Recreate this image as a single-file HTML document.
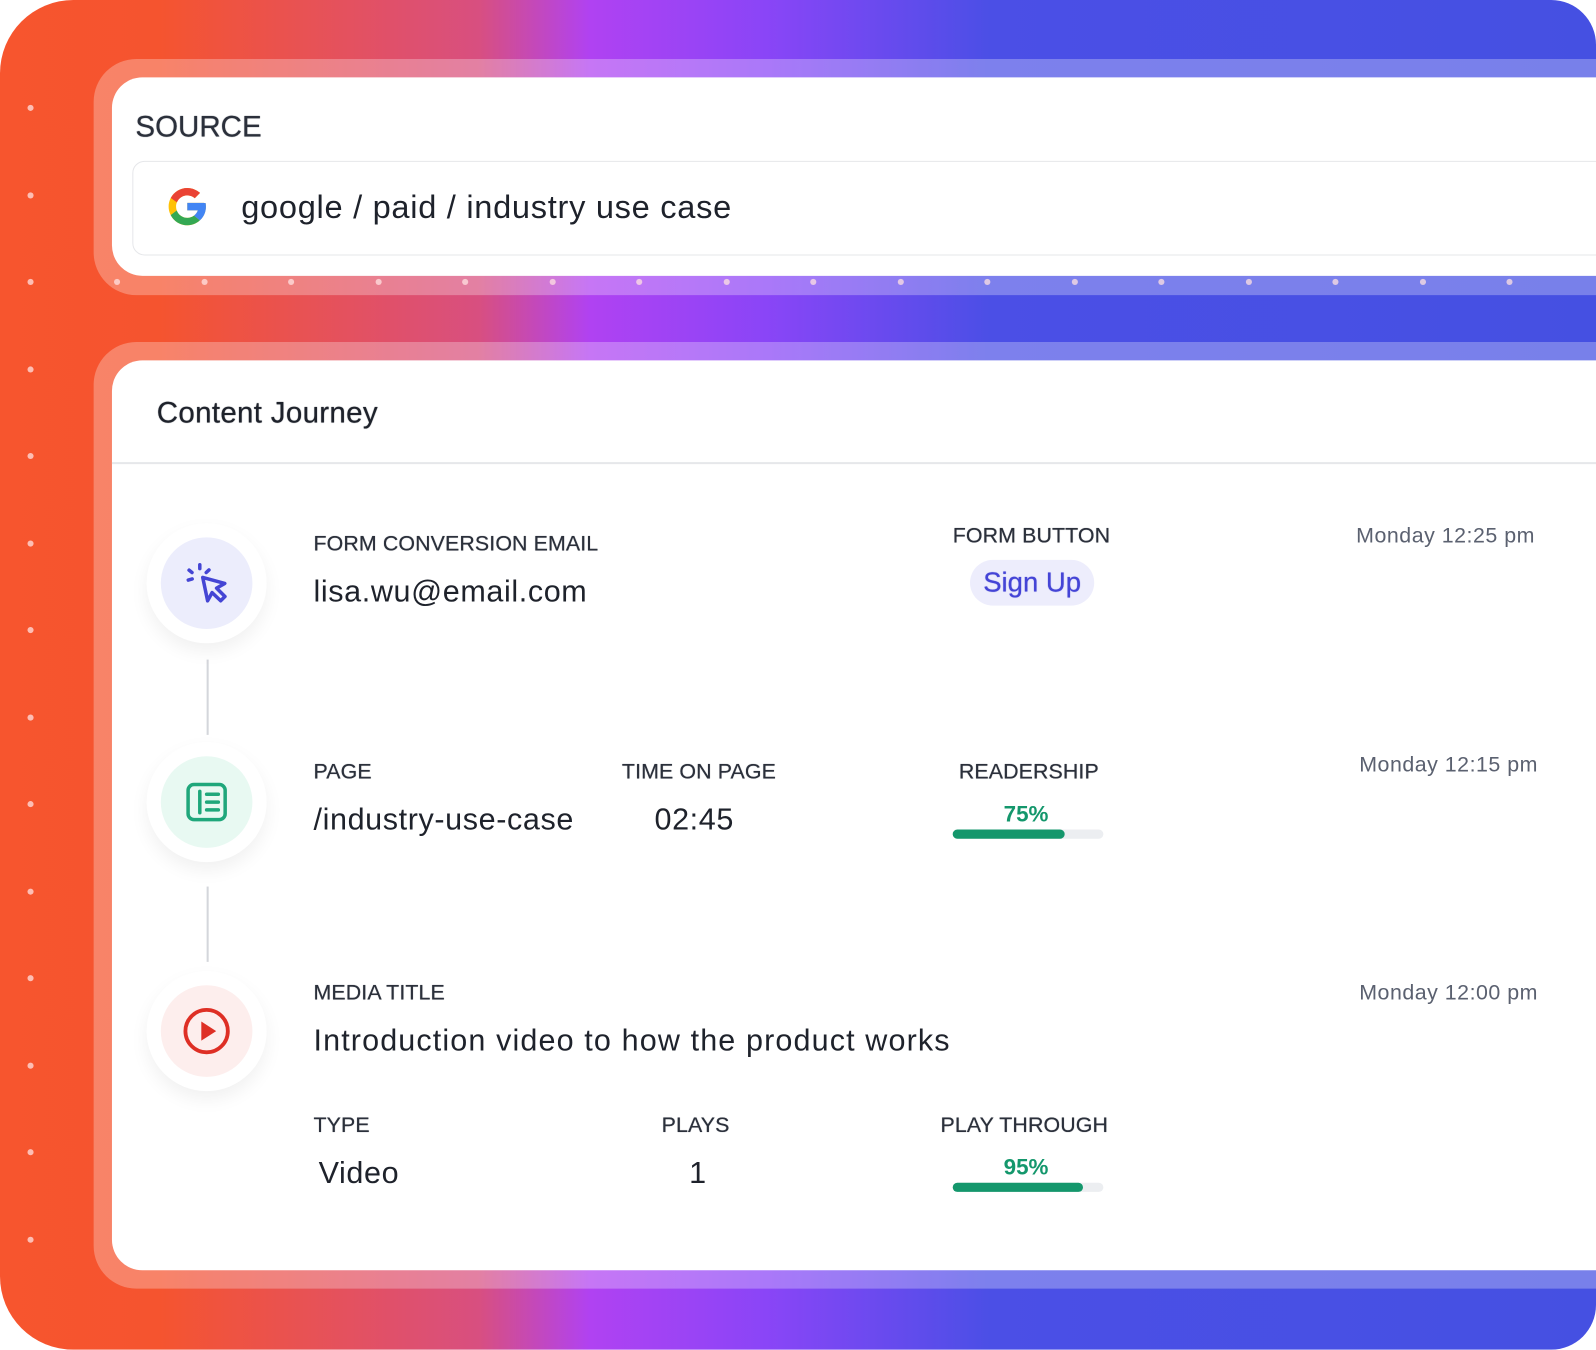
<!DOCTYPE html>
<html><head><meta charset="utf-8"><style>
html,body{margin:0;padding:0;background:#fff;}
body{width:1596px;height:1350px;overflow:hidden;font-family:"Liberation Sans",sans-serif;}
#s{position:absolute;left:0;top:0;width:1568px;height:1326px;transform:scale(1.01786);transform-origin:0 0;}
.bg{position:absolute;left:0;top:0;width:1568px;height:1326px;border-radius:72px 44px 44px 72px;
background:linear-gradient(90deg,#f7552e 0%,#f5542f 10%,#d84f80 30%,#b042f2 37%,#8a45f7 48%,#4b4fe6 62%,#4550e2 100%);overflow:hidden;}
.dot{position:absolute;width:6px;height:6px;border-radius:50%;background:rgba(255,225,225,.75);}
.frame{position:absolute;left:92px;right:-20px;border-radius:42px 0 0 42px;background:rgba(255,255,255,.28);}
.card{position:absolute;left:110px;right:-20px;background:#fff;border-radius:30px 0 0 30px;}
.abs{position:absolute;white-space:nowrap;}
.lbl{font-size:21px;color:#2b303b;letter-spacing:.1px;text-shadow:0 0 .6px #2b303b;}
.val{font-size:30px;color:#1e222b;letter-spacing:.6px;}
.time{font-size:21px;color:#5b6170;letter-spacing:.5px;}
.circ{position:absolute;width:118px;height:118px;border-radius:50%;background:#fff;box-shadow:0 8px 18px rgba(0,0,0,.06);}
.circ div{position:absolute;left:14px;top:14px;width:90px;height:90px;border-radius:50%;display:flex;align-items:center;justify-content:center;}
.vl{position:absolute;left:203px;width:2px;background:#d4d6db;}
.bar{position:absolute;width:148px;height:9px;border-radius:5px;background:#eceef1;}
.bar i{position:absolute;left:0;top:0;height:9px;border-radius:5px;background:#14976c;}
.pct{font-size:22px;font-weight:bold;color:#14976c;}
</style></head><body><div id="s">
<div class="bg">
<div class="frame" style="top:58px;height:232px;"></div>
<div class="frame" style="top:336px;height:930px;"></div>
</div>
<div id="dots"></div>
<div class="card" style="top:76px;height:195px;"></div>
<div class="card" style="top:354px;height:894px;"></div>

<div class="abs" style="left:133px;top:109px;font-size:29px;color:#2b303b;text-shadow:0 0 .8px #2b303b;">SOURCE</div>
<div class="abs" style="left:130px;top:158px;width:1460px;height:91px;border:1.5px solid #e6e7ea;border-radius:12px;"></div>
<svg class="abs" style="left:162px;top:181px" width="44" height="44" viewBox="0 0 48 48">
<path fill="#FFC107" d="M43.6 20.1H42V20H24v8h11.3c-1.6 4.7-6.1 8-11.3 8-6.6 0-12-5.4-12-12s5.4-12 12-12c3.1 0 5.8 1.2 8 3l5.7-5.7C34 6.1 29.3 4 24 4 13 4 4 13 4 24s9 20 20 20 20-9 20-20c0-1.3-.1-2.6-.4-3.9z"/>
<path fill="#EA4335" d="M6.3 14.7l6.6 4.8C14.7 15.1 19 12 24 12c3.1 0 5.8 1.2 8 3l5.7-5.7C34 6.1 29.3 4 24 4 16.3 4 9.7 8.3 6.3 14.7z"/>
<path fill="#34A853" d="M24 44c5.2 0 9.9-2 13.4-5.2l-6.2-5.2C29.2 35.1 26.7 36 24 36c-5.2 0-9.6-3.3-11.3-7.9l-6.5 5C9.5 39.6 16.2 44 24 44z"/>
<path fill="#4285F4" d="M43.6 20.1H42V20H24v8h11.3c-.8 2.2-2.2 4.2-4.1 5.6l6.2 5.2C37 39.2 44 34 44 24c0-1.3-.1-2.6-.4-3.9z"/>
</svg>
<div class="abs" style="left:237px;top:185px;font-size:32px;color:#1e222b;letter-spacing:.7px;">google / paid / industry use case</div>

<div class="abs" style="left:154px;top:390px;font-size:29px;color:#1e222b;letter-spacing:.3px;text-shadow:0 0 .8px #1e222b;">Content Journey</div>
<div class="abs" style="left:110px;top:454px;width:1460px;height:2px;background:#e6e7ea;"></div>

<div class="vl" style="top:648px;height:74px;"></div>
<div class="vl" style="top:871px;height:74px;"></div>

<div class="circ" style="left:144px;top:514px;"><div style="background:#ecedfc;">
<svg width="46" height="46" viewBox="0 0 24 24" fill="none" stroke="#4445d4" stroke-width="1.8" stroke-linecap="round" stroke-linejoin="round">
<path d="M10 9l2.5 12 2.3-4.2 4.4 4.2 2.2-2.2-4.3-4.3 4.2-2.4z"/>
<path d="M8.5 2.5v2M3 5.3l1.5 1.2M13.2 5.2l-1.4 1.3M2.6 10.4l2-.6"/></svg></div></div>
<div class="circ" style="left:144px;top:729px;"><div style="background:#e8f9f2;">
<svg width="46" height="46" viewBox="0 0 24 24" fill="none" stroke="#1fa77b" stroke-width="1.8" stroke-linecap="round">
<rect x="2.5" y="3" width="19" height="18" rx="3"/><path d="M8.5 6.5v11M12 8h6M12 12h6M12 16h6"/></svg></div></div>
<div class="circ" style="left:144px;top:954px;"><div style="background:#fdeeed;">
<svg width="50" height="50" viewBox="0 0 24 24"><circle cx="12" cy="12" r="10" fill="none" stroke="#de2f25" stroke-width="1.8"/><path d="M9.5 7.5l7 4.5-7 4.5z" fill="#de2f25"/></svg></div></div>

<div class="abs lbl" style="left:308px;top:523px;">FORM CONVERSION EMAIL</div>
<div class="abs val" style="left:308px;top:565px;">lisa.wu@email.com</div>
<div class="abs lbl" style="left:936px;top:515px;">FORM BUTTON</div>
<div class="abs" style="left:953px;top:550px;width:122px;height:45px;border-radius:23px;background:#ededfc;font-size:27px;color:#4444d6;text-align:center;line-height:45px;text-shadow:0 0 .8px #4444d6;">Sign Up</div>
<div class="abs time" style="right:60px;top:515px;">Monday 12:25 pm</div>

<div class="abs lbl" style="left:308px;top:747px;">PAGE</div>
<div class="abs val" style="left:308px;top:789px;">/industry-use-case</div>
<div class="abs lbl" style="left:611px;top:747px;">TIME ON PAGE</div>
<div class="abs val" style="left:643px;top:789px;">02:45</div>
<div class="abs lbl" style="left:942px;top:747px;">READERSHIP</div>
<div class="abs pct" style="left:986px;top:787px;">75%</div>
<div class="bar" style="left:936px;top:815px;"><i style="width:110px"></i></div>
<div class="abs time" style="right:57px;top:740px;">Monday 12:15 pm</div>

<div class="abs lbl" style="left:308px;top:964px;">MEDIA TITLE</div>
<div class="abs val" style="left:308px;top:1006px;letter-spacing:1.1px;">Introduction video to how the product works</div>
<div class="abs time" style="right:57px;top:964px;">Monday 12:00 pm</div>
<div class="abs lbl" style="left:308px;top:1094px;">TYPE</div>
<div class="abs val" style="left:313px;top:1136px;">Video</div>
<div class="abs lbl" style="left:650px;top:1094px;">PLAYS</div>
<div class="abs val" style="left:677px;top:1136px;">1</div>
<div class="abs lbl" style="left:924px;top:1094px;">PLAY THROUGH</div>
<div class="abs pct" style="left:986px;top:1134px;">95%</div>
<div class="bar" style="left:936px;top:1162px;"><i style="width:128px"></i></div>
</div>
<script>
var s=document.getElementById('s'),h='';
for(var i=0;i<14;i++){h+='<div class="dot" style="left:27px;top:'+(103+i*85.5)+'px"></div>';}
for(var j=0;j<17;j++){h+='<div class="dot" style="left:'+(112+j*85.5)+'px;top:274px"></div>';}
document.getElementById('dots').innerHTML=h;
</script>
</body></html>
